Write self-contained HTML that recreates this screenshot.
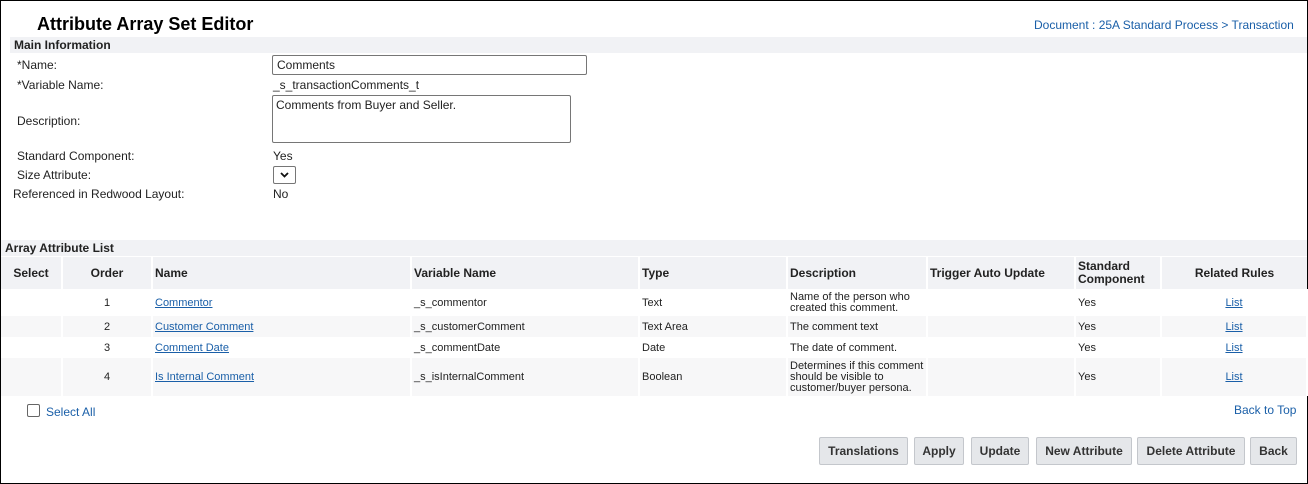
<!DOCTYPE html>
<html><head><style>
*{box-sizing:border-box;margin:0;padding:0}
body{width:1308px;height:484px;font-family:"Liberation Sans",Arial,sans-serif;font-size:12px;color:#222;background:#fff;position:relative;overflow:hidden}
.frame{position:absolute;left:0;top:0;width:1308px;height:484px;border:1px solid #000}
.a{position:absolute;white-space:nowrap}
.bar{position:absolute;background:#f1f2f5;font-weight:bold;font-size:12px;padding-left:4px;line-height:16px}
.link{color:#1a5fa8;text-decoration:underline;font-size:11px}
table{position:absolute;left:1px;top:257px;border-collapse:collapse;font-size:11px;table-layout:fixed;width:1306px}
td,th{padding:0 2px;border-right:2px solid #fff;vertical-align:middle;line-height:12px}
th{background:#f1f2f5;font-size:12px;height:32px;text-align:left;font-weight:bold}
tr.g td{background:#f7f7f8}
.btn{position:absolute;top:437px;height:28px;border:1px solid #c4c7cc;background:#e5e7ea;border-radius:2px;font-weight:bold;font-size:12px;color:#333;text-align:center;line-height:26px}
</style></head><body>
<div class="frame"></div>
<div class="a" style="left:37px;top:14px;font-size:18px;font-weight:bold;color:#000">Attribute Array Set Editor</div>
<div class="a" style="left:1034px;top:18px;color:#1a5fa8;font-size:12px">Document : 25A Standard Process &gt; Transaction</div>
<div class="bar" style="left:10px;top:37px;width:1297px;height:16px">Main Information</div>
<div class="a" style="left:17px;top:58px">*Name:</div>
<div class="a" style="left:272px;top:55px;width:315px;height:20px;border:1px solid #767676;border-radius:2px;padding:2px 4px">Comments</div>
<div class="a" style="left:17px;top:78px">*Variable Name:</div>
<div class="a" style="left:273px;top:78px">_s_transactionComments_t</div>
<div class="a" style="left:17px;top:114px">Description:</div>
<div class="a" style="left:272px;top:95px;width:299px;height:48px;border:1px solid #767676;border-radius:2px;padding:2px 3px">Comments from Buyer and Seller.</div>
<div class="a" style="left:17px;top:149px">Standard Component:</div>
<div class="a" style="left:273px;top:149px">Yes</div>
<div class="a" style="left:17px;top:168px">Size Attribute:</div>
<div class="a" style="left:273px;top:166px;width:23px;height:18px;border:1px solid #767676;border-radius:2px"><svg width="21" height="16" viewBox="0 0 21 16"><path d="M7 6l3.5 3.5L14 6" fill="none" stroke="#111" stroke-width="1.8"/></svg></div>
<div class="a" style="left:13px;top:187px">Referenced in Redwood Layout:</div>
<div class="a" style="left:273px;top:187px">No</div>
<div class="bar" style="left:1px;top:240px;width:1306px;height:16px">Array Attribute List</div>
<table>
<colgroup><col style="width:61px"><col style="width:90px"><col style="width:259px"><col style="width:228px"><col style="width:148px"><col style="width:140px"><col style="width:148px"><col style="width:86px"><col style="width:146px"></colgroup>
<tr style="height:32px"><th style="text-align:center">Select</th><th style="text-align:center">Order</th><th>Name</th><th>Variable Name</th><th>Type</th><th>Description</th><th>Trigger Auto Update</th><th style="line-height:13px">Standard Component</th><th style="text-align:center;border-right:0">Related Rules</th></tr>
<tr style="height:27px"><td></td><td style="text-align:center">1</td><td><span class="link">Commentor</span></td><td>_s_commentor</td><td>Text</td><td style="line-height:11px">Name of the person who created this comment.</td><td></td><td>Yes</td><td style="text-align:center"><span class="link">List</span></td></tr>
<tr class="g" style="height:21px"><td></td><td style="text-align:center">2</td><td><span class="link">Customer Comment</span></td><td>_s_customerComment</td><td>Text Area</td><td>The comment text</td><td></td><td>Yes</td><td style="text-align:center"><span class="link">List</span></td></tr>
<tr style="height:21px"><td></td><td style="text-align:center">3</td><td><span class="link">Comment Date</span></td><td>_s_commentDate</td><td>Date</td><td>The date of comment.</td><td></td><td>Yes</td><td style="text-align:center"><span class="link">List</span></td></tr>
<tr class="g" style="height:38px"><td></td><td style="text-align:center">4</td><td><span class="link">Is Internal Comment</span></td><td>_s_isInternalComment</td><td>Boolean</td><td style="line-height:11px">Determines if this comment should be visible to customer/buyer persona.</td><td></td><td>Yes</td><td style="text-align:center"><span class="link">List</span></td></tr>
</table>
<div class="a" style="left:27px;top:404px;width:13px;height:13px;border:1px solid #666;border-radius:2px"></div>
<div class="a" style="left:46px;top:405px;color:#1a5fa8">Select All</div>
<div class="a" style="left:1234px;top:403px;color:#1a5fa8">Back to Top</div>
<div class="btn" style="left:819px;width:89px">Translations</div>
<div class="btn" style="left:914px;width:50px">Apply</div>
<div class="btn" style="left:971px;width:58px">Update</div>
<div class="btn" style="left:1036px;width:96px">New Attribute</div>
<div class="btn" style="left:1137px;width:108px">Delete Attribute</div>
<div class="btn" style="left:1250px;width:47px">Back</div>
</body></html>
